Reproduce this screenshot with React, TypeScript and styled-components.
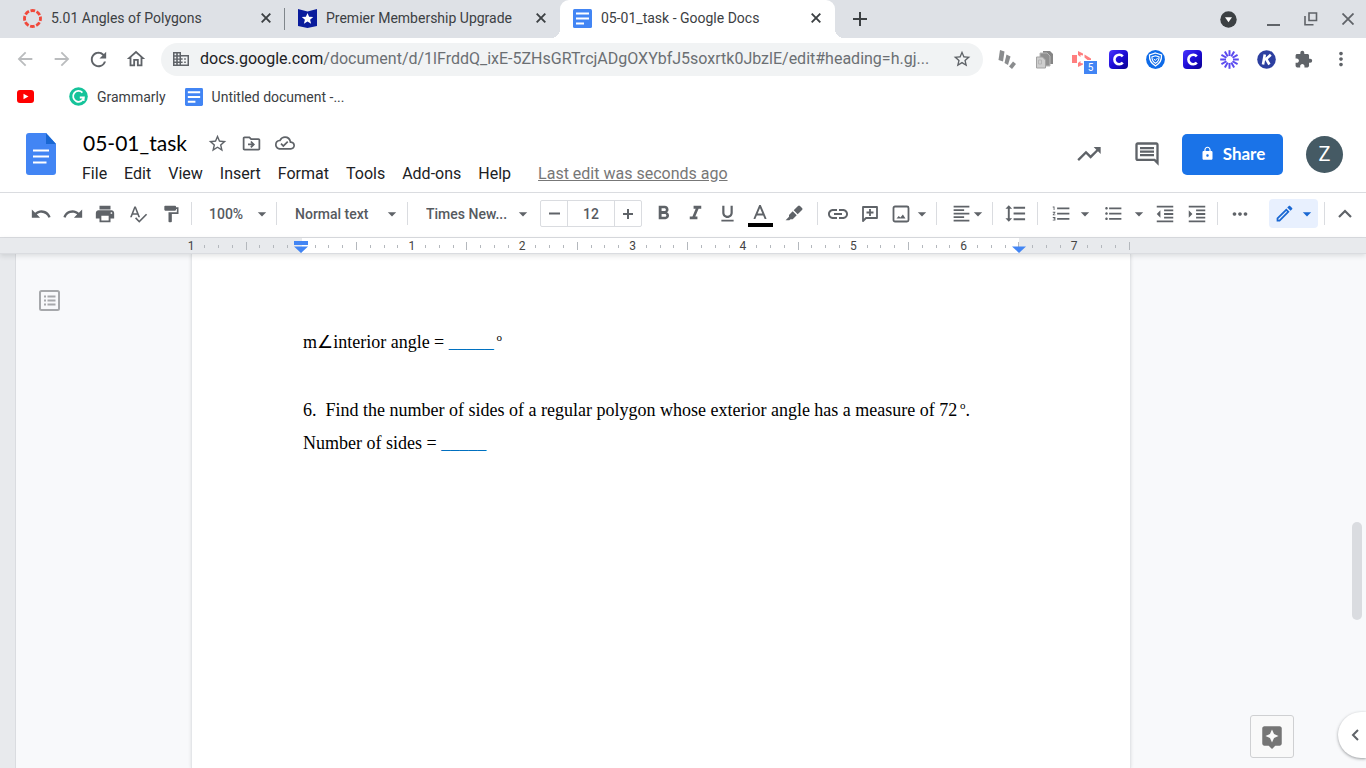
import React from 'react';
import styled, { createGlobalStyle, css } from 'styled-components';
import {
  MdArrowBack,
  MdArrowDropDown,
  MdArrowForward,
  MdAssistant,
  MdExtension,
  MdFormatAlignLeft,
  MdFormatBold,
  MdFormatIndentDecrease,
  MdFormatIndentIncrease,
  MdFormatItalic,
  MdFormatLineSpacing,
  MdFormatListBulleted,
  MdFormatListNumbered,
  MdFormatPaint,
  MdFormatUnderlined,
  MdInsertLink,
  MdLock,
  MdMoreHoriz,
  MdMoreVert,
  MdOutlineCloudDone,
  MdOutlineComment,
  MdOutlineDriveFileMove,
  MdOutlineEdit,
  MdOutlineHome,
  MdPrint,
  MdRedo,
  MdRefresh,
  MdSpellcheck,
  MdStarBorder,
  MdTrendingUp,
  MdUndo,
} from 'react-icons/md';

const Global = createGlobalStyle`
  *, *::before, *::after { box-sizing: border-box; }
  html, body { margin: 0; background: #f8f9fb; }
  body { font-family: Roboto, "Liberation Sans", sans-serif; color: #202124; }
  button, input, select { font: inherit; color: inherit; border: 0; padding: 0; margin: 0; background: none; }
  button { cursor: pointer; }
  svg { display: block; flex: none; }
`;

const Shell = styled.div`
  display: flex;
  flex-direction: column;
  height: 100vh;
  overflow: hidden;
`;

/* ---------- Browser tab strip ---------- */

const TabStrip = styled.div`
  display: flex;
  height: 38px;
  padding-left: 10px;
  background: #dee1e6;
`;

const Tab = styled.div<{ $active?: boolean; $divider?: boolean }>`
  position: relative;
  display: flex;
  align-items: center;
  flex: 0 1 275px;
  min-width: 0;
  padding: 0 10px 2px 13px;
  gap: 9px;
  font-size: 14px;
  line-height: 20px;
  color: #3c4043;
  ${(p) =>
    p.$divider &&
    css`
      &::after {
        content: '';
        position: absolute;
        right: 0;
        top: 8px;
        width: 1px;
        height: 22px;
        background: #80868b;
      }
    `}
  ${(p) =>
    p.$active &&
    css`
      background: #fff;
      border-radius: 9px 9px 0 0;
      &::before,
      &::after {
        content: '';
        position: absolute;
        bottom: 0;
        width: 9px;
        height: 9px;
      }
      &::before {
        left: -9px;
        background: radial-gradient(circle at 0 0, transparent 9px, #fff 9px);
      }
      &::after {
        right: -9px;
        background: radial-gradient(circle at 100% 0, transparent 9px, #fff 9px);
      }
    `}
`;

const TabTitle = styled.span`
  flex: 1;
  min-width: 0;
  overflow: hidden;
  white-space: nowrap;
`;

const PlainButton = styled.button<{ $w?: number }>`
  display: flex;
  align-items: center;
  justify-content: center;
  flex: none;
  width: ${(p) => p.$w ?? 18}px;
  color: #3c4043;
`;

const WindowControls = styled.div`
  display: flex;
  margin-left: auto;
`;

/* ---------- Address bar ---------- */

const AddressRow = styled.div`
  display: flex;
  align-items: center;
  height: 42px;
  padding: 0 7px 0 6px;
  background: #fff;
`;

const AddressButton = styled(PlainButton)<{ $dim?: boolean }>`
  position: relative;
  height: 36px;
  color: ${(p) => (p.$dim ? '#babcbe' : '#5f6368')};
`;

const Omnibox = styled.div`
  display: flex;
  align-items: center;
  flex: 1;
  min-width: 0;
  height: 33px;
  margin: 0 6px 0 7px;
  padding: 0 11px 0 12px;
  gap: 11px;
  border-radius: 17px;
  background: #f1f3f4;
  color: #5f6368;
`;

const Url = styled.div`
  flex: 1;
  min-width: 0;
  overflow: hidden;
  white-space: nowrap;
  font-size: 16px;
  line-height: 24px;
  color: #6b6f73;
  b {
    font-weight: 400;
    color: #202124;
  }
`;

const ExtensionBadge = styled.span`
  position: absolute;
  left: 21px;
  top: 20px;
  width: 13px;
  height: 13px;
  background: #4285f4;
  color: #fff;
  font-size: 10px;
  line-height: 13px;
`;

/* ---------- Bookmarks ---------- */

const Bookmarks = styled.nav`
  display: flex;
  align-items: center;
  height: 35px;
  padding: 0 17px 2px;
  gap: 19px;
  background: #fff;
`;

const Bookmark = styled.a<{ $after?: number }>`
  display: flex;
  align-items: center;
  gap: 9px;
  margin-right: ${(p) => p.$after ?? 0}px;
  font-size: 14px;
  line-height: 20px;
  color: #3c4043;
  text-decoration: none;
  white-space: nowrap;
`;

/* ---------- Docs header ---------- */

const DocHeader = styled.header`
  display: flex;
  height: 78px;
  padding: 0 23px 0 26px;
  background: #fff;
  border-bottom: 1px solid #dadce0;
  flex: none;
`;

const LogoLink = styled.a`
  display: block;
  margin: 18px 26px 0 0;
`;

const HeaderMain = styled.div`
  display: flex;
  flex-direction: column;
  flex: 1;
  min-width: 0;
  padding-top: 14px;
`;

const TitleRow = styled.div`
  display: flex;
  align-items: center;
  height: 30px;
  padding-bottom: 2px;
`;

const TitleInput = styled.input`
  width: 118px;
  height: 28px;
  padding-left: 1px;
  font-family: Lato, Roboto, sans-serif;
  font-size: 21px;
  line-height: 28px;
  color: #000;
`;

const TitleButton = styled(PlainButton)`
  color: #5f6368;
`;

const MenuRow = styled.nav`
  display: flex;
  align-items: center;
  height: 30px;
  gap: 17px;
  font-size: 16px;
  line-height: 20px;
  white-space: nowrap;
`;

const MenuButton = styled.button`
  line-height: 20px;
  color: #202124;
`;

const LastEdit = styled.a`
  margin-left: 10px;
  color: #777;
  text-decoration: underline;
`;

const HeaderActions = styled.div`
  display: flex;
  align-items: center;
  height: 78px;
`;

const ShareButton = styled.button`
  display: flex;
  align-items: center;
  justify-content: center;
  width: 101px;
  height: 41px;
  margin: 0 23px 0 6px;
  padding-bottom: 2px;
  gap: 8px;
  border-radius: 5px;
  background: #1a73e8;
  color: #fff;
  font-family: Lato, Roboto, sans-serif;
  font-size: 17px;
  font-weight: 700;
`;

const Avatar = styled.button`
  width: 37px;
  height: 37px;
  border-radius: 50%;
  background: #455a64;
  color: #fff;
  font-size: 20px;
  line-height: 37px;
`;

/* ---------- Docs toolbar ---------- */

const Toolbar = styled.div`
  display: flex;
  align-items: center;
  flex: none;
  height: 45px;
  padding: 0 1px 3px 25px;
  background: #fff;
  border-bottom: 1px solid #dadce0;
  color: #5f6368;
`;

const ToolButton = styled.button<{ $w?: number }>`
  display: flex;
  align-items: center;
  justify-content: center;
  flex: none;
  width: ${(p) => p.$w ?? 32}px;
  height: 27px;
  color: #5f6368;
`;

const Separator = styled.span<{ $before?: number; $after?: number }>`
  flex: none;
  width: 1px;
  height: 23px;
  margin: 0 ${(p) => p.$after ?? 0}px 0 ${(p) => p.$before ?? 0}px;
  background: #dadce0;
`;

const Picker = styled.label<{ $w: number }>`
  display: grid;
  align-items: center;
  flex: none;
  width: ${(p) => p.$w}px;
  font-size: 14px;
  font-weight: 500;
  select {
    grid-area: 1 / 1;
    width: 100%;
    height: 27px;
    padding-left: 17px;
    appearance: none;
    outline: none;
    color: #565a5f;
  }
  svg {
    grid-area: 1 / 1;
    justify-self: end;
    pointer-events: none;
  }
`;

const Stepper = styled.div`
  display: flex;
  flex: none;
  height: 27px;
  margin: 0 5px 0 7px;
  border: 1px solid #dadce0;
  border-radius: 2px;
  button {
    display: flex;
    align-items: center;
    justify-content: center;
    width: 26px;
  }
  input {
    width: 48px;
    border: solid #dadce0;
    border-width: 0 1px;
    text-align: center;
    font-size: 14px;
    font-weight: 500;
    color: #565a5f;
  }
`;

const TextColor = styled(ToolButton)`
  flex-direction: column;
  justify-content: flex-end;
  gap: 4px;
  &::after {
    content: '';
    width: 25px;
    height: 4px;
    background: #000;
  }
`;

const ToolbarEnd = styled.div`
  display: flex;
  align-items: center;
  margin-left: auto;
`;

const ModeButton = styled.button`
  display: flex;
  align-items: center;
  justify-content: center;
  width: 49px;
  height: 29px;
  margin-right: 6px;
  gap: 2px;
  padding-left: 4px;
  border-radius: 4px;
  background: #e8f0fe;
  color: #1967d2;
`;

/* ---------- Ruler ---------- */

const RulerBar = styled.div`
  display: flex;
  flex: none;
  height: 16px;
  padding-left: 191px;
  background: #e8eaed;
  border-bottom: 1px solid #dadce0;
  box-shadow: 0 2px 5px rgba(60, 64, 67, 0.15);
  position: relative;
  z-index: 1;
`;

const RulerScale = styled.div`
  position: relative;
  display: flex;
  justify-content: space-between;
  align-items: center;
  flex: none;
  width: 939px;
  padding-top: 1px;
  background: linear-gradient(#fff, #fff) 111px 0 / 717px 100% no-repeat;
`;

const Mark = styled.span`
  display: flex;
  justify-content: center;
  width: 0;
  font-size: 12px;
  line-height: 14px;
  color: #444;
`;

const Tick = styled.i<{ $long?: boolean }>`
  flex: none;
  width: 1px;
  height: ${(p) => (p.$long ? 8 : 3)}px;
  background: #b4b8bd;
`;

const IndentMarker = styled.svg<{ $at: number }>`
  position: absolute;
  left: ${(p) => p.$at}px;
  top: 3px;
`;

/* ---------- Workspace ---------- */

const Workspace = styled.main`
  display: flex;
  flex: 1;
  min-height: 0;
  background: #f8f9fb;
  border-left: 15px solid #e8eaed;
  position: relative;
  z-index: 0;
`;

const OutlineRail = styled.div`
  flex: none;
  width: 176px;
  padding: 36px 0 0 23px;
  border-left: 1px solid #dadce0;
`;

const RailButton = styled.button`
  color: #a6a8ab;
`;

const Page = styled.article`
  flex: none;
  width: 940px;
  padding: 72px 110px 0 111px;
  background: #fff;
  border: solid #e4e6e9;
  border-width: 0 1px;
  box-shadow: 0 0 3px rgba(60, 64, 67, 0.15);
  font-family: 'Liberation Serif', serif;
  font-size: 18px;
  line-height: 33px;
  color: #000;
  white-space: pre;
  p {
    margin: 0;
    min-height: 33px;
  }
  p:nth-child(2) {
    min-height: 35px;
  }
  sup {
    font-size: 11px;
    line-height: 0;
  }
`;

const MathSymbol = styled.span`
  font-family: 'DejaVu Sans', sans-serif;
  line-height: 0;
`;

const Blank = styled.span`
  color: #0070c0;
`;

const ScrollThumb = styled.div`
  position: absolute;
  right: 4px;
  top: 268px;
  width: 10px;
  height: 98px;
  border-radius: 5px;
  background: #dadce0;
`;

const ExploreButton = styled.button`
  position: absolute;
  right: 72px;
  bottom: 10px;
  display: flex;
  align-items: center;
  justify-content: center;
  width: 44px;
  height: 43px;
  border: 1px solid #cfd0d2;
  border-radius: 3px;
  background: #f9f9f9;
  color: #757575;
`;

const SidePanelToggle = styled.button`
  position: absolute;
  right: 0;
  bottom: 10px;
  display: flex;
  align-items: center;
  padding-left: 13px;
  width: 28px;
  height: 46px;
  border-radius: 23px 0 0 23px;
  background: #fff;
  color: #5f6368;
  box-shadow: 0 1px 3px rgba(60, 64, 67, 0.5);
`;

/* ---------- Drawings ---------- */

const CloseIcon = () => (
  <svg width="10" height="10" viewBox="0 0 10 10">
    <path d="m.7.7 8.600 8.600m0-8.600-8.600 8.600" stroke="#3c4043" strokeWidth="1.900" />
  </svg>
);

const CanvasRing = () => (
  <svg width="19" height="19" viewBox="0 0 20 20">
    <circle cx="10" cy="10" r="8.400" fill="none" stroke="#f0483b" strokeWidth="3" strokeDasharray="4.900 1.700" strokeDashoffset="2.400" />
  </svg>
);

const StarShield = () => (
  <svg width="19" height="19" viewBox="0 0 19 19">
    <path d="M0 0 9.500 2.500 19 0V17L9.500 19 0 17Z" fill="#0a1c9c" />
    <path d="m9.500 4 1.600 3.800 4.100.3-3.100 2.700 1 4-3.600-2.200-3.600 2.200 1-4-3.100-2.700 4.100-.3Z" fill="#fff" />
  </svg>
);

const DocsTile = ({ size = 19 }: { size?: number }) => (
  <svg width={size} height={size} viewBox="0 0 19 19">
    <rect width="19" height="19" rx="1.500" fill="#4285f4" />
    <path d="M3 4.500h13M3 9.500h13M3 14.500h8" stroke="#fff" strokeWidth="2" />
  </svg>
);

const YouTube = () => (
  <svg width="17" height="13" viewBox="0 0 17 13">
    <rect width="17" height="13" rx="3" fill="#f00" />
    <path d="m6.500 3.800 5 2.700-5 2.700Z" fill="#fff" />
  </svg>
);

const Grammarly = () => (
  <svg width="19" height="19" viewBox="0 0 19 19">
    <circle cx="9.500" cy="9.500" r="9.300" fill="#15c39a" />
    <path d="M13.400 5.600a5.400 5.400 0 1 0 1.400 4.900h-4" fill="none" stroke="#fff" strokeWidth="1.800" />
    <path d="M14.800 14v-3.500" stroke="#fff" strokeWidth="1.400" />
  </svg>
);

const Building = () => (
  <svg width="16" height="14" viewBox="0 0 16 14">
    <path
      fillRule="evenodd"
      fill="#5f6368"
      d="M0 0h8v3h8v11H0ZM1.500 1.500v1.700h1.700V1.500Zm3.300 0v1.700h1.700V1.500ZM1.500 4.700v1.700h1.700V4.700Zm3.300 0v1.700h1.700V4.700ZM1.500 7.800v1.700h1.700V7.800Zm3.300 0v1.700h1.700V7.800ZM1.500 11v1.600h1.700V11Zm3.300 0v1.600h1.700V11ZM8 4.500v1.700h1.600v1.600H8v1.700h1.600V11H8v1.500h6.500v-8Zm3.200 1.700h1.600v1.600h-1.600Zm0 3.300h1.600V11h-1.600Z"
    />
  </svg>
);

const DocsLogo = () => (
  <svg width="30" height="42" viewBox="0 0 30 42">
    <path d="M3 0h17l10 11v28a3 3 0 0 1-3 3H3a3 3 0 0 1-3-3V3a3 3 0 0 1 3-3Z" fill="#4285f4" />
    <path d="M20 0 30 11H20Z" fill="#1967d2" />
    <path d="M7 17.500h16M7 23.500h16M7 29.500h13.500" stroke="#fff" strokeWidth="2.200" />
  </svg>
);

const ProfileArrow = () => (
  <svg width="17" height="17" viewBox="0 0 17 17">
    <circle cx="8.500" cy="8.500" r="8.200" fill="#3c4043" />
    <path d="M5 6.300h7l-3.500 5Z" fill="#fff" />
  </svg>
);

const RestoreIcon = () => (
  <svg width="14" height="14" viewBox="0 0 14 14" fill="none" stroke="#5f6368" strokeWidth="1.600">
    <path d="M5 1h7.500v7.500H5ZM1 4v8.800h8.500" />
  </svg>
);

const Slashes = () => (
  <svg width="19" height="19" viewBox="0 0 19 19" fill="#8a8c8e">
    <path d="M2 0 6.500 1.500 5 11.500.5 10Z" />
    <path d="M8.500 4.500 12.500 6.500 10 15 6.500 13Z" />
    <path d="M15 11.500 18 14 14 19 11 16.500Z" />
  </svg>
);

const Copies = () => (
  <svg width="19" height="19" viewBox="0 0 19 19">
    <path d="M8 1h7l3 3v10H8Z" fill="#858585" />
    <path d="M5 3h7l3 3v10H5Z" fill="#8f8f8f" stroke="#b8b8b8" />
    <path d="M1.500 7h6l3 3v8h-9Z" fill="#cecece" stroke="#a2a2a2" />
    <path d="M3.500 10h3v4h-3Z" fill="none" stroke="#b4b4b4" />
  </svg>
);

const Recorder = () => (
  <svg width="20" height="18" viewBox="0 0 20 18" fill="#ff7f7f">
    <path d="M0 5h5v8H0Z" />
    <path d="M6 5V1l5 2.500v2L8.500 5v2Zm0 8v4l5-2.500v-1L8.500 13v-2ZM12.500 4.500l6.500 4v1.500h-3.500l-3-2.500Z" />
  </svg>
);

const CTile = () => (
  <svg width="19" height="19" viewBox="0 0 19 19">
    <defs>
      <linearGradient id="tile" x1="0" y1="0" x2="1" y2="1">
        <stop offset="0" stopColor="#4a35ff" />
        <stop offset=".5" stopColor="#1d0cd6" />
        <stop offset="1" stopColor="#0a0090" />
      </linearGradient>
    </defs>
    <rect width="19" height="19" rx="4" fill="url(#tile)" />
    <path d="M13.800 6.300a4.800 4.800 0 1 0 0 6.400" fill="none" stroke="#fff" strokeWidth="2.600" />
  </svg>
);

const Shield = () => (
  <svg width="19" height="19" viewBox="0 0 19 19">
    <circle cx="9.500" cy="9.500" r="9.400" fill="#0e6be8" />
    <path d="m9.500 3 6 2c.3 5-1.600 8.500-6 11-4.400-2.500-6.300-6-6-11Z" fill="none" stroke="#fff" strokeWidth="1.300" />
    <path d="m9.500 5.800 3.600 1.100c0 2.800-1.100 4.800-3.600 6.400C7 11.700 5.900 9.700 5.900 6.900Z" fill="none" stroke="#fff" strokeWidth="1.100" />
    <path d="m7.800 8.800 1.500 1.700 2.300-2.500" fill="none" stroke="#fff" />
  </svg>
);

const Burst = () => (
  <svg width="19" height="19" viewBox="-9.500 -9.500 19 19" stroke="#5b4bef" strokeWidth="2">
    {[0, 30, 60, 90, 120, 150, 180, 210, 240, 270, 300, 330].map((deg) => (
      <path key={deg} d="M0-3.500V-9.300" transform={`rotate(${deg})`} />
    ))}
  </svg>
);

const KBadge = () => (
  <svg width="19" height="19" viewBox="0 0 19 19">
    <circle cx="9.500" cy="9.500" r="9.300" fill="#2c3fa0" />
    <path d="M7.800 4.500 6 14.500M13.800 4.700 8 10M9.200 9l3.200 5.500" fill="none" stroke="#fff" strokeWidth="2.600" />
  </svg>
);

const CommentPlus = () => (
  <svg width="18" height="18" viewBox="0 0 18 18">
    <path d="M2 2h14v11H5l-3 3Z" fill="none" stroke="currentColor" strokeWidth="1.800" strokeLinejoin="round" />
    <path d="M9 4v7M5.500 7.500h7" stroke="currentColor" strokeWidth="1.800" />
  </svg>
);

const ImageIcon = () => (
  <svg width="18" height="18" viewBox="0 0 18 18">
    <rect x="1.500" y="1.500" width="15" height="15" rx="1.500" fill="none" stroke="currentColor" strokeWidth="1.800" />
    <path d="m4.500 13.500 2.200-2.500 1.700 1.500 2.500-3 2.600 4Z" fill="currentColor" />
  </svg>
);

const LetterA = () => (
  <svg width="14" height="14" viewBox="0 0 14 14">
    <path d="M1.300 14 7 .6 12.700 14M3.300 9.500h7.400" fill="none" stroke="currentColor" strokeWidth="1.900" />
  </svg>
);

const Highlighter = () => (
  <svg width="18" height="18" viewBox="0 0 18 18" fill="currentColor">
    <path d="M8.700 5.200 13 .9a1.400 1.400 0 0 1 2 0l2 2a1.400 1.400 0 0 1 0 2l-4.300 4.300Z" />
    <path d="m7.700 6.200 4 4-4 4H5.500L4.300 15.200H.6l3.400-3.500V9.900Z" />
  </svg>
);

const OutlineIcon = () => (
  <svg width="21" height="21" viewBox="0 0 21 21" fill="none" stroke="currentColor" strokeWidth="2">
    <rect x="1" y="1" width="19" height="19" rx="1.500" />
    <path d="M5 6.500h2M5 10.500h2M5 14.500h2M8.500 6.500h8M8.500 10.500h8M8.500 14.500h8" />
  </svg>
);

const ChevronUp = () => (
  <svg width="14" height="9" viewBox="0 0 14 9">
    <path d="m1 8 6-6 6 6" fill="none" stroke="currentColor" strokeWidth="2.200" />
  </svg>
);

const ChevronLeft = () => (
  <svg width="8" height="12" viewBox="0 0 8 12">
    <path d="M7 1 2 6l5 5" fill="none" stroke="currentColor" strokeWidth="2" />
  </svg>
);

/* ---------- Data ---------- */

const MENUS = ['File', 'Edit', 'View', 'Insert', 'Format', 'Tools', 'Add-ons', 'Help'];

const EXTENSIONS: { name: string; icon: React.ReactNode; badge?: string }[] = [
  { name: 'Slashes', icon: <Slashes /> },
  { name: 'Copies', icon: <Copies /> },
  { name: 'Recorder', icon: <Recorder />, badge: '5' },
  { name: 'Clever', icon: <CTile /> },
  { name: 'Shield', icon: <Shield /> },
  { name: 'Clever portal', icon: <CTile /> },
  { name: 'Loom', icon: <Burst /> },
  { name: 'Kami', icon: <KBadge /> },
  { name: 'Extensions', icon: <MdExtension size={19} /> },
  { name: 'Browser menu', icon: <MdMoreVert size={22} /> },
];

/* 8.5 inches in eighths, counted from the left edge of the paper */
const EIGHTHS = Array.from({ length: 69 }, (_, i) => i);

function RulerMark({ index }: { index: number }) {
  if (index % 8 === 0) {
    return <Mark>{index === 8 ? '' : Math.abs(index / 8 - 1)}</Mark>;
  }
  return (
    <Mark>
      <Tick $long={index % 8 === 4} />
    </Mark>
  );
}

export default function App() {
  return (
    <Shell>
      <Global />
      <TabStrip>
        <Tab $divider>
          <CanvasRing />
          <TabTitle>5.01 Angles of Polygons</TabTitle>
          <PlainButton aria-label="Close tab"><CloseIcon /></PlainButton>
        </Tab>
        <Tab>
          <StarShield />
          <TabTitle>Premier Membership Upgrade</TabTitle>
          <PlainButton aria-label="Close tab"><CloseIcon /></PlainButton>
        </Tab>
        <Tab $active>
          <DocsTile />
          <TabTitle>05-01_task - Google Docs</TabTitle>
          <PlainButton aria-label="Close tab"><CloseIcon /></PlainButton>
        </Tab>
        <PlainButton $w={50} aria-label="New tab">
          <svg width="14" height="14" viewBox="0 0 14 14" stroke="#3c4043" strokeWidth="2">
            <path d="M7 0v14M0 7h14" />
          </svg>
        </PlainButton>
        <WindowControls>
          <PlainButton $w={53} aria-label="Search tabs"><ProfileArrow /></PlainButton>
          <PlainButton $w={37} aria-label="Minimize">
            <svg width="13" height="14" viewBox="0 0 13 14"><path d="M0 13h13" stroke="#5f6368" strokeWidth="2" /></svg>
          </PlainButton>
          <PlainButton $w={37} aria-label="Restore"><RestoreIcon /></PlainButton>
          <PlainButton $w={37} aria-label="Close window">
            <svg width="12" height="12" viewBox="0 0 12 12"><path d="m.5.5 11 11m0-11-11 11" stroke="#5f6368" strokeWidth="1.800" /></svg>
          </PlainButton>
        </WindowControls>
      </TabStrip>

      <AddressRow>
        <AddressButton $w={37} $dim aria-label="Back"><MdArrowBack size={22} /></AddressButton>
        <AddressButton $w={37} $dim aria-label="Forward"><MdArrowForward size={22} /></AddressButton>
        <AddressButton $w={37} aria-label="Reload"><MdRefresh size={23} /></AddressButton>
        <AddressButton $w={37} aria-label="Home"><MdOutlineHome size={22} /></AddressButton>
        <Omnibox>
          <Building />
          <Url>
            <b>docs.google.com</b>/document/d/1lFrddQ_ixE-5ZHsGRTrcjADgOXYbfJ5soxrtk0JbzlE/edit#heading=h.gj...
          </Url>
          <MdStarBorder size={20} />
        </Omnibox>
        {EXTENSIONS.map((item) => (
          <AddressButton key={item.name} $w={37} aria-label={item.name}>
            {item.icon}
            {item.badge && <ExtensionBadge>{item.badge}</ExtensionBadge>}
          </AddressButton>
        ))}
      </AddressRow>

      <Bookmarks>
        <Bookmark href="#" $after={16} aria-label="YouTube"><YouTube /></Bookmark>
        <Bookmark href="#"><Grammarly />Grammarly</Bookmark>
        <Bookmark href="#"><DocsTile size={18} />Untitled document -...</Bookmark>
      </Bookmarks>

      <DocHeader>
        <LogoLink href="#" aria-label="Docs home"><DocsLogo /></LogoLink>
        <HeaderMain>
          <TitleRow>
            <TitleInput aria-label="Document name" defaultValue="05-01_task" />
            <TitleButton $w={34} aria-label="Star"><MdStarBorder size={21} /></TitleButton>
            <TitleButton $w={34} aria-label="Move"><MdOutlineDriveFileMove size={21} /></TitleButton>
            <TitleButton $w={34} aria-label="Saved to Drive"><MdOutlineCloudDone size={20} /></TitleButton>
          </TitleRow>
          <MenuRow>
            {MENUS.map((name) => (
              <MenuButton key={name}>{name}</MenuButton>
            ))}
            <LastEdit href="#">Last edit was seconds ago</LastEdit>
          </MenuRow>
        </HeaderMain>
        <HeaderActions>
          <PlainButton $w={59} aria-label="Activity"><MdTrendingUp size={28} color="#5f6368" /></PlainButton>
          <PlainButton $w={58} aria-label="Comments"><MdOutlineComment size={28} color="#5f6368" /></PlainButton>
          <ShareButton><MdLock size={15} />Share</ShareButton>
          <Avatar aria-label="Account">Z</Avatar>
        </HeaderActions>
      </DocHeader>

      <Toolbar>
        <ToolButton aria-label="Undo"><MdUndo size={22} /></ToolButton>
        <ToolButton aria-label="Redo"><MdRedo size={22} /></ToolButton>
        <ToolButton aria-label="Print"><MdPrint size={22} /></ToolButton>
        <ToolButton $w={34} aria-label="Spelling"><MdSpellcheck size={20} /></ToolButton>
        <ToolButton aria-label="Paint format"><MdFormatPaint size={20} /></ToolButton>
        <Separator $before={4} />
        <Picker $w={80}>
          <select aria-label="Zoom"><option>100%</option></select>
          <MdArrowDropDown size={20} />
        </Picker>
        <Separator $before={4} $after={1} />
        <Picker $w={124}>
          <select aria-label="Styles"><option>Normal text</option></select>
          <MdArrowDropDown size={20} />
        </Picker>
        <Separator $before={5} $after={1} />
        <Picker $w={124}>
          <select aria-label="Font"><option>Times New...</option></select>
          <MdArrowDropDown size={20} />
        </Picker>
        <Stepper>
          <button aria-label="Decrease font size">
            <svg width="11" height="11" viewBox="0 0 11 11"><path d="M0 5.500h11" stroke="currentColor" strokeWidth="2" /></svg>
          </button>
          <input aria-label="Font size" defaultValue="12" />
          <button aria-label="Increase font size">
            <svg width="10" height="10" viewBox="0 0 10 10"><path d="M0 5h10M5 0v10" stroke="currentColor" strokeWidth="2" /></svg>
          </button>
        </Stepper>
        <ToolButton aria-label="Bold"><MdFormatBold size={23} /></ToolButton>
        <ToolButton aria-label="Italic"><MdFormatItalic size={23} /></ToolButton>
        <ToolButton aria-label="Underline"><MdFormatUnderlined size={21} /></ToolButton>
        <TextColor $w={34} aria-label="Text color"><LetterA /></TextColor>
        <ToolButton $w={34} aria-label="Highlight color"><Highlighter /></ToolButton>
        <Separator $before={6} $after={4} />
        <ToolButton aria-label="Insert link"><MdInsertLink size={24} /></ToolButton>
        <ToolButton aria-label="Add comment"><CommentPlus /></ToolButton>
        <ToolButton $w={30} aria-label="Insert image"><ImageIcon /></ToolButton>
        <ToolButton $w={12} aria-label="Image options"><MdArrowDropDown size={20} /></ToolButton>
        <Separator $before={8} $after={8} />
        <ToolButton aria-label="Align"><MdFormatAlignLeft size={21} /></ToolButton>
        <ToolButton $w={2} aria-label="Align options"><MdArrowDropDown size={20} /></ToolButton>
        <Separator $before={13} $after={6} />
        <ToolButton aria-label="Line spacing"><MdFormatLineSpacing size={23} /></ToolButton>
        <Separator $before={6} $after={7} />
        <ToolButton aria-label="Numbered list"><MdFormatListNumbered size={21} /></ToolButton>
        <ToolButton $w={16} aria-label="List options"><MdArrowDropDown size={20} /></ToolButton>
        <ToolButton $w={40} aria-label="Bulleted list"><MdFormatListBulleted size={21} /></ToolButton>
        <ToolButton $w={12} aria-label="Bullet options"><MdArrowDropDown size={20} /></ToolButton>
        <ToolButton $w={40} aria-label="Decrease indent"><MdFormatIndentDecrease size={22} /></ToolButton>
        <ToolButton $w={24} aria-label="Increase indent"><MdFormatIndentIncrease size={22} /></ToolButton>
        <Separator $before={8} $after={6} />
        <ToolButton aria-label="More"><MdMoreHoriz size={22} /></ToolButton>
        <ToolbarEnd>
          <ModeButton aria-label="Editing mode">
            <MdOutlineEdit size={21} />
            <MdArrowDropDown size={20} />
          </ModeButton>
          <Separator />
          <ToolButton $w={40} aria-label="Hide the menus"><ChevronUp /></ToolButton>
        </ToolbarEnd>
      </Toolbar>

      <RulerBar>
        <RulerScale>
          {EIGHTHS.map((i) => (
            <RulerMark key={i} index={i} />
          ))}
          <IndentMarker $at={103} width="14" height="12" viewBox="0 0 14 12">
            <path d="M0 0h14v4H0ZM0 5.500h14L7 12Z" fill="#4285f4" />
          </IndentMarker>
          <IndentMarker $at={821} width="14" height="12" viewBox="0 0 14 12">
            <path d="M0 5.500h14L7 12Z" fill="#4285f4" />
          </IndentMarker>
        </RulerScale>
      </RulerBar>

      <Workspace>
        <OutlineRail>
          <RailButton aria-label="Show document outline"><OutlineIcon /></RailButton>
        </OutlineRail>
        <Page>
          <p>m<MathSymbol>∠</MathSymbol>interior angle = <Blank>_____</Blank><sup> o</sup></p>
          <p />
          <p>6.  Find the number of sides of a regular polygon whose exterior angle has a measure of 72<sup> o</sup>.</p>
          <p>Number of sides = <Blank>_____</Blank></p>
        </Page>
        <ScrollThumb />
        <ExploreButton aria-label="Explore"><MdAssistant size={26} /></ExploreButton>
        <SidePanelToggle aria-label="Show side panel"><ChevronLeft /></SidePanelToggle>
      </Workspace>
    </Shell>
  );
}
